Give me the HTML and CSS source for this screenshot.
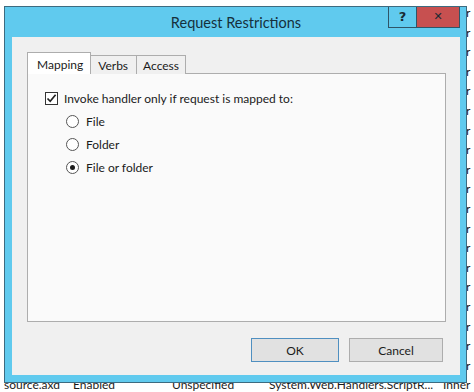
FILE: index.html
```html
<!DOCTYPE html>
<html lang="en">
<head>
    <meta charset="UTF-8">
    <title>Request Restrictions</title>
    <link rel="stylesheet" href="styles.css">
</head>
<body>

    <!-- Handler mappings list behind the dialog -->
    <div class="list" id="list"></div>

    <!-- Dialog -->
    <div class="window">
        <div class="titlebar">
            <span></span>
            <span class="title">Request Restrictions</span>
            <div class="caption-btns">
                <span class="cap-btn help">?</span>
                <span class="cap-btn close">&#x2715;</span>
            </div>
        </div>

        <div class="client">
            <div class="tabs">
                <span class="tab active">Mapping</span>
                <span class="tab verbs">Verbs</span>
                <span class="tab">Access</span>
            </div>

            <div class="panel">
                <label class="row">
                    <span class="checkbox">
                        <svg width="11" height="11" viewBox="0 0 11 11"><path d="M1.5 5.5 L4.2 8.3 L9.6 1.8" fill="none" stroke="#222" stroke-width="1.7"/></svg>
                    </span>
                    Invoke handler only if request is mapped to:
                </label>
                <div class="options">
                    <label class="row"><span class="radio"></span>File</label>
                    <label class="row"><span class="radio"></span>Folder</label>
                    <label class="row"><span class="radio checked"></span>File or folder</label>
                </div>
            </div>

            <div class="footer">
                <button class="btn default">OK</button>
                <button class="btn cancel">Cancel</button>
            </div>
        </div>
    </div>

    <script>
        const rows = [];
        for (let i = 0; i < 20; i++) {
            rows.push({ name: 'source.axd', state: 'Enabled', path: 'Unspecified', handler: 'System.Web.Handlers.ScriptR...', entry: 'Inher' });
        }

        const list = document.getElementById('list');
        rows.forEach(row => {
            const el = document.createElement('div');
            el.className = 'list-row';
            el.innerHTML = `<span class="c-name">${row.name}</span><span class="c-state">${row.state}</span>` +
                `<span class="c-path">${row.path}</span><span class="c-handler">${row.handler}</span><span class="c-entry">${row.entry}</span>`;
            list.appendChild(el);
        });
    </script>
</body>
</html>
```

FILE: styles.css
```css
body {
    margin: 0;
    background-color: #fff;
    font-family: Lato, "Open Sans", sans-serif;
    font-size: 12px;
    color: #1b1b1b;
    position: relative;
    height: 392px;
    overflow: hidden;
}
.list {
    width: 474px;
    overflow: hidden;
    padding-top: 3px;
}
.list-row {
    display: flex;
    height: 19.6px;
    line-height: 19.6px;
    white-space: nowrap;
}
.c-name { width: 73px; padding-left: 4px; box-sizing: border-box; flex: none; }
.c-state { width: 99px; flex: none; }
.c-path { width: 97px; flex: none; }
.c-handler { width: 174px; flex: none; }
.c-entry { width: 31px; flex: none; }

.window {
    position: absolute;
    left: 4px;
    top: 6px;
    width: 463px;
    height: 377px;
    box-sizing: border-box;
    border: 1px solid #3d6b80;
    background-color: #60caee;
    padding: 0 6px 7px 7px;
    display: flex;
    flex-direction: column;
}
.titlebar {
    height: 30px;
    display: grid;
    grid-template-columns: 1fr auto 1fr;
    align-items: start;
}
.title {
    font-size: 14.5px;
    line-height: 31px;
    color: #15303c;
}
.caption-btns {
    justify-self: end;
    display: flex;
    border: 1px solid #2f5568;
    border-top: none;
}
.cap-btn {
    height: 20px;
    line-height: 20px;
    text-align: center;
    font-weight: bold;
    color: #1a2a33;
}
.help {
    width: 27px;
    border-right: 1px solid #2f5568;
    font-size: 13px;
    font-family: "DejaVu Sans", sans-serif;
}
.close {
    width: 42px;
    background-color: #c75050;
    font-size: 11px;
    font-family: "DejaVu Sans", sans-serif;
}

.client {
    flex: 1;
    background-color: #f0f0f0;
    padding: 15px 14px 13px 15px;
    display: flex;
    flex-direction: column;
}
.tabs {
    display: flex;
    align-items: flex-end;
    height: 22px;
    margin-bottom: -1px;
    position: relative;
}
.tab {
    height: 19px;
    line-height: 19px;
    padding: 0 6px;
    border: 1px solid #adadad;
    border-bottom: none;
    border-left: none;
    background-color: #f0f0f0;
    box-sizing: border-box;
}
.tab.verbs {
    padding: 0 8px 0 7px;
}
.tab.active {
    height: 22px;
    line-height: 24px;
    padding: 0 7px 0 9px;
    background-color: #fff;
    border-left: 1px solid #adadad;
    position: relative;
    z-index: 1;
}
.panel {
    flex: 1;
    background-color: #fafafa;
    border: 1px solid #adadad;
    padding: 13px 18px 0 17px;
}
.row {
    display: flex;
    align-items: center;
    height: 23px;
    gap: 6px;
}
.checkbox {
    width: 11px;
    height: 11px;
    border: 1px solid #333;
    background-color: #fff;
    display: flex;
}
.options {
    padding-left: 21px;
}
.options .row {
    gap: 7px;
}
.radio {
    width: 11px;
    height: 11px;
    border: 1px solid #555;
    border-radius: 50%;
    background-color: #fff;
    display: flex;
    align-items: center;
    justify-content: center;
}
.radio.checked::after {
    content: "";
    width: 5px;
    height: 5px;
    border-radius: 50%;
    background-color: #1b1b1b;
}
.footer {
    display: flex;
    justify-content: flex-end;
    gap: 10px;
    margin-top: 16px;
    padding-right: 3px;
}
.btn {
    height: 24px;
    font-family: inherit;
    font-size: 12px;
    color: #1b1b1b;
    background-color: #e1e1e1;
    border: 1px solid #adadad;
}
.btn.default {
    width: 88px;
    border-color: #4f8fc0;
}
.btn.cancel {
    width: 94px;
}
```
